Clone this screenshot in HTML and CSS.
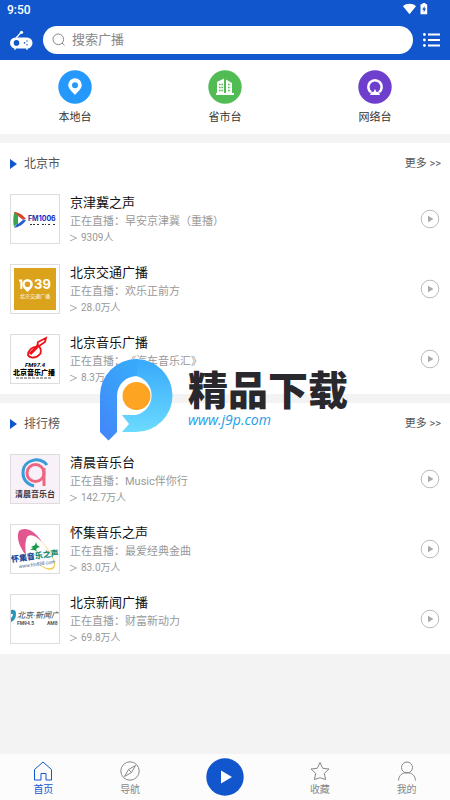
FILE: index.html
```html
<!DOCTYPE html>
<html lang="zh-CN">
<head>
<meta charset="utf-8">
<meta name="viewport" content="width=device-width, initial-scale=1">
<title>广播</title>
<link rel="stylesheet" href="styles.css">
</head>
<body>
<header class="top">
  <div class="status">
    <span>9:50</span>
    <span class="status-icons">
      <svg width="13" height="12" viewBox="0 0 13 12"><path fill="#fff" d="M0 3.2C3.7.1 9.3.1 13 3.2L6.5 11.200z"/></svg>
      <svg width="8" height="12" viewBox="0 0 8 12"><path fill="#fff" d="M2.500 0h3v1.200h1.700v10H.5v-10h2z"/><path fill="#1156cd" d="M4.600 3 2.200 6.700h1.500V9.500L6 5.600H4.600z"/></svg>
    </span>
  </div>
  <div class="bar">
    <svg width="24" height="20" viewBox="0 0 24 20"><path d="M7 8 12.500 2" stroke="#fff" stroke-width="1.200"/><circle cx="12.500" cy="2.300" r="1.600" fill="#fff"/><rect x="1" y="7.500" width="22.500" height="11" rx="5.500" fill="#fff"/><path d="M6 17v2.800M18 17v2.800" stroke="#fff" stroke-width="1.500"/><circle cx="7.500" cy="12.900" r="2.800" fill="#1156cd"/><g fill="#1156cd"><circle cx="15.500" cy="12.900" r=".8"/><circle cx="18" cy="11" r=".7"/><circle cx="18" cy="14.700" r=".7"/></g></svg>
    <label class="search">
      <svg width="14" height="14" viewBox="0 0 14 14" fill="none" stroke="#888"><circle cx="6.300" cy="6.300" r="5.300"/><path d="m10 10 2.500 2.300"/></svg>
      <input type="search" placeholder="搜索广播" aria-label="搜索广播">
    </label>
    <button class="menu" aria-label="菜单"><svg width="17" height="14" viewBox="0 0 17 14"><path d="M5 1.500h12M5 7h12M5 12.500h12" stroke="#fff" stroke-width="1.800"/><g fill="#fff"><circle cx="1.400" cy="1.500" r="1.400"/><circle cx="1.400" cy="7" r="1.400"/><circle cx="1.400" cy="12.500" r="1.400"/></g></svg></button>
  </div>
</header>

<main>
  <nav class="shortcuts">
    <a href="#local"><svg width="34" height="34" viewBox="0 0 34 34"><circle cx="17" cy="17" r="16.700" fill="#2499fb"/><path fill="#fff" fill-rule="evenodd" d="M17 8.300a6.800 6.800 0 0 0-6.800 6.800c0 3.700 4.300 6.900 6.800 10 2.500-3.100 6.800-6.300 6.800-10A6.800 6.800 0 0 0 17 8.300zm0 4a3 3 0 1 1 0 6 3 3 0 0 1 0-6z"/></svg>本地台</a>
    <a href="#province"><svg width="34" height="34" viewBox="0 0 34 34"><circle cx="17" cy="17" r="16.700" fill="#51bc54"/><path fill="#fff" d="m9 12 7-3.500V23h2V9.500l6 3.500v10h2v2H8v-2h1z"/><path d="M11 14.500h4M11 17.500h4M11 20.500h4M20 14.500h2.500M20 17.500h2.500M20 20.500h2.500" stroke="#51bc54" stroke-width="1.400" stroke-dasharray="1.600 .7"/></svg>省市台</a>
    <a href="#network"><svg width="34" height="34" viewBox="0 0 34 34"><circle cx="17" cy="17" r="16.700" fill="#6e3fcd"/><path d="M13 22.300a6.700 6.700 0 1 1 8 0" fill="none" stroke="#fff" stroke-width="2.600"/><path d="m12 25 1.500-3.200 2 .2 1.500-3 1.500 3 2-.2L22 25z" fill="#fff"/></svg>网络台</a>
  </nav>

  <section>
    <div class="heading"><h2>北京市</h2><a href="#beijing">更多 &gt;&gt;</a></div>
    <ul>
      <li>
        <svg class="logo" viewBox="0 0 48 48"><path d="M3 17c4 0 8 2 12 7l-6 1-5-3z" fill="#d4472a"/><path d="M3 18c-1 5-1 10 0 14l4-4V20z" fill="#39a64b"/><path d="M3 33c5-1 10-4 12-8l-6-1-3 5z" fill="#255fcf"/><path d="m7 21 5 4-5 4z" fill="#fff"/><text x="17" y="26" class="g fm">FM<tspan class="fm2">1006</tspan></text><path d="M19 29.500h5m2 0h2m3 0h4m2 0h3m2 0h3" stroke="#333" stroke-width="1.200" stroke-dasharray="2 1"/></svg>
        <div class="info"><h3>京津冀之声</h3><p>正在直播：早安京津冀（重播）</p><p class="count"><svg width="7" height="8" viewBox="0 0 7 8"><path d="M0 1l6.500 3L0 7"/></svg>9309人</p></div>
        <button class="play" aria-label="播放京津冀之声"><svg width="20" height="20" viewBox="0 0 20 20"><circle cx="10" cy="10" r="8.800"/><path d="m8 6.800 5.500 3.200L8 13.200z"/></svg></button>
      </li>
      <li>
        <svg class="logo" viewBox="0 0 48 48"><path fill="#dba21b" d="M3 3h42v42H3z"/><path d="M8 15.500h2.300V24" fill="none" stroke="#fff" stroke-width="2"/><path fill="#fff" fill-rule="evenodd" d="M16.500 14a5.300 5.300 0 0 0-5.200 5.300c0 3.500 3.400 5.700 5.200 7.700 1.800-2 5.300-4.200 5.300-7.700a5.300 5.300 0 0 0-5.300-5.300zm0 2.500a2.800 2.800 0 1 1 0 5.600 2.800 2.800 0 0 1 0-5.600z"/><text x="23" y="24" class="g num">39</text><text x="24" y="33" class="cap gold">北京交通广播</text></svg>
        <div class="info"><h3>北京交通广播</h3><p>正在直播：欢乐正前方</p><p class="count"><svg width="7" height="8" viewBox="0 0 7 8"><path d="M0 1l6.500 3L0 7"/></svg>28.0万人</p></div>
        <button class="play" aria-label="播放北京交通广播"><svg width="20" height="20" viewBox="0 0 20 20"><circle cx="10" cy="10" r="8.800"/><path d="m8 6.800 5.500 3.200L8 13.200z"/></svg></button>
      </li>
      <li>
        <svg class="logo" viewBox="0 0 48 48"><path d="m35 3-8 4-1 5c-5-1-9 4-9 8 2 4 9 3 12-1 2-3 1-5-1-8l6-4z" fill="none" stroke="#f01018" stroke-width="1.800"/><path d="m28 10-9 9" stroke="#f01018" stroke-width="3"/><text x="24" y="32" class="cap fm97">FM97.4</text><text x="23" y="40" class="cap music">北京音乐广播</text><path d="M5 43h36" stroke="#555" stroke-dasharray="3 1"/></svg>
        <div class="info"><h3>北京音乐广播</h3><p>正在直播：《汽车音乐汇》</p><p class="count"><svg width="7" height="8" viewBox="0 0 7 8"><path d="M0 1l6.500 3L0 7"/></svg>8.3万人</p></div>
        <button class="play" aria-label="播放北京音乐广播"><svg width="20" height="20" viewBox="0 0 20 20"><circle cx="10" cy="10" r="8.800"/><path d="m8 6.800 5.500 3.200L8 13.200z"/></svg></button>
      </li>
    </ul>
  </section>

  <section>
    <div class="heading"><h2>排行榜</h2><a href="#rank">更多 &gt;&gt;</a></div>
    <ul>
      <li>
        <svg class="logo" viewBox="0 0 48 48"><path fill="#f8f1f7" d="M0 0h48v48H0z"/><path d="M36 10C30 1 12 4 12 18c0 6 4 11 11 13" fill="none" stroke="#399cd9" stroke-width="3"/><circle cx="24.500" cy="18" r="8.500" fill="none" stroke="#ef6685" stroke-width="3"/><path d="M33 13v18" fill="none" stroke="#ef6685" stroke-width="3"/><text x="24" y="42" class="cap morning">清晨音乐台</text></svg>
        <div class="info"><h3>清晨音乐台</h3><p>正在直播：Music伴你行</p><p class="count"><svg width="7" height="8" viewBox="0 0 7 8"><path d="M0 1l6.500 3L0 7"/></svg>142.7万人</p></div>
        <button class="play" aria-label="播放清晨音乐台"><svg width="20" height="20" viewBox="0 0 20 20"><circle cx="10" cy="10" r="8.800"/><path d="m8 6.800 5.500 3.200L8 13.200z"/></svg></button>
      </li>
      <li>
        <svg class="logo" viewBox="0 0 48 48"><path d="M31 17C24 5 13 1 8 6c-3 5 0 16 7 24-1-8-1-16 2-19 4-2 9 1 14 6z" fill="#e2558f"/><path d="M28 14c7 6 16 19 16 26-1 8-10 5-17-2 6 5 14 8 16 2 1-5-7-18-15-26z" fill="#f2ca46"/><path d="m20 22 4-2 1-3 1 3 3 2-3 1-1 2 2 2-4-2-4 0 3-2z" fill="#1c9a4b"/><g transform="rotate(-8 24 32)"><text x="24" y="34" class="cap huai"><tspan fill="#244b9b">怀集音</tspan><tspan fill="#268b75">乐之声</tspan></text><text x="25" y="41" class="cap url">www.fm838.com</text></g></svg>
        <div class="info"><h3>怀集音乐之声</h3><p>正在直播：最爱经典金曲</p><p class="count"><svg width="7" height="8" viewBox="0 0 7 8"><path d="M0 1l6.500 3L0 7"/></svg>83.0万人</p></div>
        <button class="play" aria-label="播放怀集音乐之声"><svg width="20" height="20" viewBox="0 0 20 20"><circle cx="10" cy="10" r="8.800"/><path d="m8 6.800 5.500 3.200L8 13.200z"/></svg></button>
      </li>
      <li>
        <svg class="logo" viewBox="0 0 48 48"><path d="M0 15q5-1 5 4 0 6-5 8v-4q2-2 2-4H0z" fill="#2796b8"/><text x="27" y="23" class="cap news">北京·新闻广</text><text x="6" y="30" class="freq">FM94.5</text><text x="36" y="30" class="freq">AM8</text></svg>
        <div class="info"><h3>北京新闻广播</h3><p>正在直播：财富新动力</p><p class="count"><svg width="7" height="8" viewBox="0 0 7 8"><path d="M0 1l6.500 3L0 7"/></svg>69.8万人</p></div>
        <button class="play" aria-label="播放北京新闻广播"><svg width="20" height="20" viewBox="0 0 20 20"><circle cx="10" cy="10" r="8.800"/><path d="m8 6.800 5.500 3.200L8 13.200z"/></svg></button>
      </li>
    </ul>
  </section>
</main>

<nav class="tabs">
  <a href="#home" class="active"><svg width="20" height="20" viewBox="0 0 20 20"><path d="M1.500 19V8.500L10 1l8.500 7.500V19H13v-6.500H8V19z"/></svg>首页</a>
  <a href="#guide"><svg width="20" height="20" viewBox="0 0 20 20"><circle cx="10" cy="10" r="9.200"/><path d="m15.500 4.500-4 7-7 4 4-7zM8.500 8.500l3 3"/></svg>导航</a>
  <button class="player" aria-label="播放"><svg width="38" height="38" viewBox="0 0 38 38"><circle cx="19" cy="19" r="18.700" fill="#1156cd"/><path fill="#fff" d="m15 12.500 11 6.500-11 6.500z"/></svg></button>
  <a href="#favorites"><svg width="20" height="20" viewBox="0 0 20 20"><path d="m10 1.500 2.700 5.800 6.300.7-4.700 4.300 1.300 6.300-5.600-1.900-5.600 1.900 1.300-6.300L1 8l6.300-.7z"/></svg>收藏</a>
  <a href="#me"><svg width="20" height="20" viewBox="0 0 20 20"><circle cx="10" cy="6.500" r="5.500"/><path d="M1.500 19.500c.3-5 3.500-7.800 8.500-7.800s8.200 2.800 8.500 7.800"/></svg>我的</a>
</nav>

<div class="brand">
  <svg width="74" height="82" viewBox="0 0 74 82">
    <defs><linearGradient id="a" x1="0" y1="1" x2=".6" y2="0"><stop offset="0" stop-color="#4384f8"/><stop offset="1" stop-color="#38a8fb"/></linearGradient><linearGradient id="b" x1="0" y1="0" x2="0" y2="1"><stop offset="0" stop-color="#38a8fb"/><stop offset="1" stop-color="#6bdbff"/></linearGradient></defs>
    <circle cx="36.500" cy="37" r="20" fill="#fff"/>
    <path fill="url(#b)" d="M36 0a36.500 36.500 0 0 1 0 73H22l7-8-7-9h14a20 20 0 0 0 0-39z"/>
    <path fill="url(#a)" d="M0 37A36.500 36.500 0 0 1 37 0v17a20 20 0 0 0-20 20v36l-8.500 8.500L0 73z"/>
    <circle cx="36.500" cy="37" r="14" fill="#fda522"/>
  </svg>
  <div class="brand-text"><strong>精品下载</strong><span>www.j9p.com</span></div>
</div>
</body>
</html>
```
FILE: styles.css
```css
* { box-sizing: border-box; }
body {
  margin: 0;
  min-height: 100vh;
  display: flex;
  flex-direction: column;
  position: relative;
  background: #f3f3f3;
  color: #333;
  font: 11px/16px Roboto, "Noto Sans CJK SC", sans-serif;
  text-spacing-trim: space-all;
}
h2, h3, p, ul { margin: 0; padding: 0; font-weight: 400; }
ul { list-style: none; }
a { color: inherit; text-decoration: none; }
button { border: 0; padding: 0; background: none; }
svg { display: block; flex: none; }

.top { background: #1156cd; color: #fff; }
.status {
  display: flex;
  justify-content: space-between;
  height: 20px;
  padding: 0 22px 0 7px;
  font-size: 12px;
  line-height: 20px;
  font-weight: 500;
}
.status-icons { display: flex; gap: 4px; padding-top: 3px; }
.bar {
  display: flex;
  align-items: center;
  gap: 10px;
  height: 40px;
  padding: 0 10px 0 9px;
}
.search {
  flex: 1;
  display: flex;
  align-items: center;
  gap: 6px;
  height: 28px;
  padding: 0 9px;
  border-radius: 14px;
  background: #fff;
}
.search input {
  flex: 1;
  min-width: 0;
  border: 0;
  padding: 0;
  outline: 0;
  background: none;
  font: inherit;
  font-size: 13px;
}
.search input::placeholder { color: #888; }

.shortcuts {
  display: grid;
  grid-template-columns: repeat(3, 1fr);
  height: 74px;
  padding-top: 10px;
  background: #fff;
}
.shortcuts a {
  display: flex;
  flex-direction: column;
  align-items: center;
  gap: 6px;
}

section { margin-top: 9px; background: #fff; }
.heading {
  display: flex;
  align-items: center;
  justify-content: space-between;
  height: 41px;
  padding: 0 9px 0 10px;
  color: #555;
}
.heading h2 {
  display: flex;
  align-items: center;
  gap: 7px;
  font-size: 12px;
}
.heading h2::before {
  content: "";
  border: solid transparent;
  border-width: 5px 0 5px 7px;
  border-left-color: #1156cd;
}
li {
  display: flex;
  align-items: center;
  gap: 10px;
  height: 70px;
  padding: 0 10px;
}
.logo {
  width: 50px;
  height: 50px;
  border: 1px solid #ddd;
  background: #fff;
}
.info { flex: 1; color: #999; }
.info h3 { color: #111; font-size: 13px; line-height: 22px; }
.info .count {
  display: flex;
  align-items: center;
  gap: 4px;
  font-size: 10px;
}
.count svg { fill: none; stroke: #aaa; }
.play svg { fill: none; stroke: #bbb; }
.play path { fill: #aaa; stroke: none; }

.g { font-family: Inter, sans-serif; font-weight: 700; }
.fm { font-size: 7px; fill: #223ba8; }
.fm2 { fill: #0d29d1; }
.num { font-size: 13px; fill: #fff; }
.cap { text-anchor: middle; }
.gold { font-size: 5px; fill: #fff; }
.fm97 { font-size: 6px; font-weight: 700; font-style: italic; }
.music { font-size: 7px; font-weight: 900; }
.morning { font-size: 8px; font-weight: 700; fill: #3d333c; }
.huai { font-size: 8px; font-weight: 900; }
.url { font-size: 5px; font-style: italic; fill: #2867a0; }
.news { font-size: 8px; font-weight: 500; font-style: italic; fill: #52616c; }
.freq { font-size: 5px; font-weight: 700; fill: #555; }

.tabs {
  position: sticky;
  bottom: 0;
  display: grid;
  grid-template-columns: 1fr 1fr 103px 1fr 1fr;
  align-items: center;
  height: 46px;
  margin-top: auto;
  background: #fcfcfc;
  color: #888;
  font-size: 10px;
}
.tabs a {
  display: flex;
  flex-direction: column;
  align-items: center;
  gap: 1px;
  padding-top: 4px;
}
.tabs a svg { fill: none; stroke: currentColor; }
.tabs .active { color: #1156cd; }
.player { justify-self: center; }

.brand {
  position: absolute;
  top: 359px;
  left: 100px;
  display: flex;
  gap: 14px;
  pointer-events: none;
}
.brand-text { display: flex; flex-direction: column; gap: 3px; padding-top: 8px; }
.brand strong {
  font: oblique 8deg 900 40px/42px "Noto Sans CJK SC", sans-serif;
  color: #29292d;
}
.brand span {
  font: italic 14px/16px "Open Sans", sans-serif;
  color: #239ee8;
}
```
